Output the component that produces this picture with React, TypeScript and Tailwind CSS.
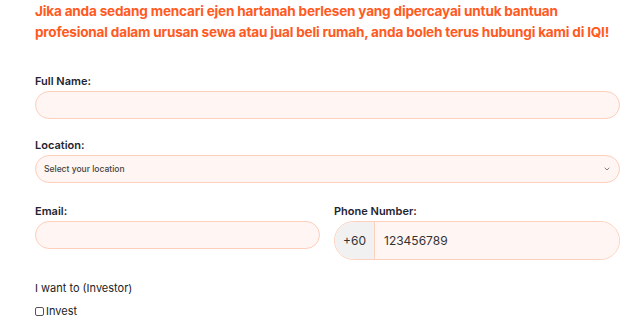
import { ChevronDown } from "lucide-react";

// ── Field helpers ─────────────────────────────────────────────────────────────

const inputBase =
  "w-full h-[28px] rounded-full bg-[#fff5f3] border-[1.5px] border-[#fdcfbc] outline-none px-3 text-[12px] text-[#333]";

function Label({ children }: { children: React.ReactNode }) {
  return <p className="text-[11px] font-semibold text-[#1f2430] mb-[3px] leading-[14px]">{children}</p>;
}

// ── Page ───────────────────────────────────────────────────────────────────────

export default function App() {
  return (
    <div className="w-[640px] h-[320px] bg-white overflow-hidden" style={{ fontFamily: "Inter, 'Noto Sans', sans-serif" }}>
      <div className="pl-[35px] pr-[20px]">
        {/* Intro */}
        <h2 className="text-[#ff5a1f] text-[13.6px] font-bold leading-[21px] pt-[1px] tracking-[-0.2px] whitespace-nowrap">
          Jika anda sedang mencari ejen hartanah berlesen yang dipercayai untuk bantuan
          <br />
          profesional dalam urusan sewa atau jual beli rumah, anda boleh terus hubungi kami di IQI!
        </h2>

        {/* Full name */}
        <div className="mt-[31px]">
          <Label>Full Name:</Label>
          <input className={inputBase} />
        </div>

        {/* Location */}
        <div className="mt-[19px]">
          <Label>Location:</Label>
          <div className="relative">
            <div className={`${inputBase} flex items-center !px-[8px]`}>
              <span className="text-[8.5px] font-medium text-[#444]">Select your location</span>
            </div>
            <ChevronDown className="absolute right-[9px] top-[10px] text-[#666]" size={8} strokeWidth={2.5} />
          </div>
        </div>

        {/* Email + phone */}
        <div className="mt-[21px] flex gap-[14px] items-start">
          <div className="w-[285px]">
            <Label>Email:</Label>
            <input className={inputBase} />
          </div>
          <div className="flex-1">
            <Label>Phone Number:</Label>
            <div className="flex h-[39px] rounded-full border-[1.5px] border-[#fdcfbc] overflow-hidden">
              <div className="w-[40px] bg-[#f1f1f1] border-r-[1.5px] border-[#fdcfbc] flex items-center justify-end pr-[8px] text-[12px] text-[#333]">
                +60
              </div>
              <div className="flex-1 bg-[#fff5f3] flex items-center pl-[9px] text-[12px] text-[#333]">123456789</div>
            </div>
          </div>
        </div>

        {/* Investor */}
        <p className="mt-[21px] text-[11px] text-[#222] leading-[14px]">I want to (Investor)</p>
        <label className="mt-[9px] flex items-center gap-[2px] text-[11px] text-[#222] leading-[14px]">
          <span className="w-[9px] h-[9px] border border-[#555] rounded-[2px] inline-block" />
          Invest
        </label>
      </div>
    </div>
  );
}
